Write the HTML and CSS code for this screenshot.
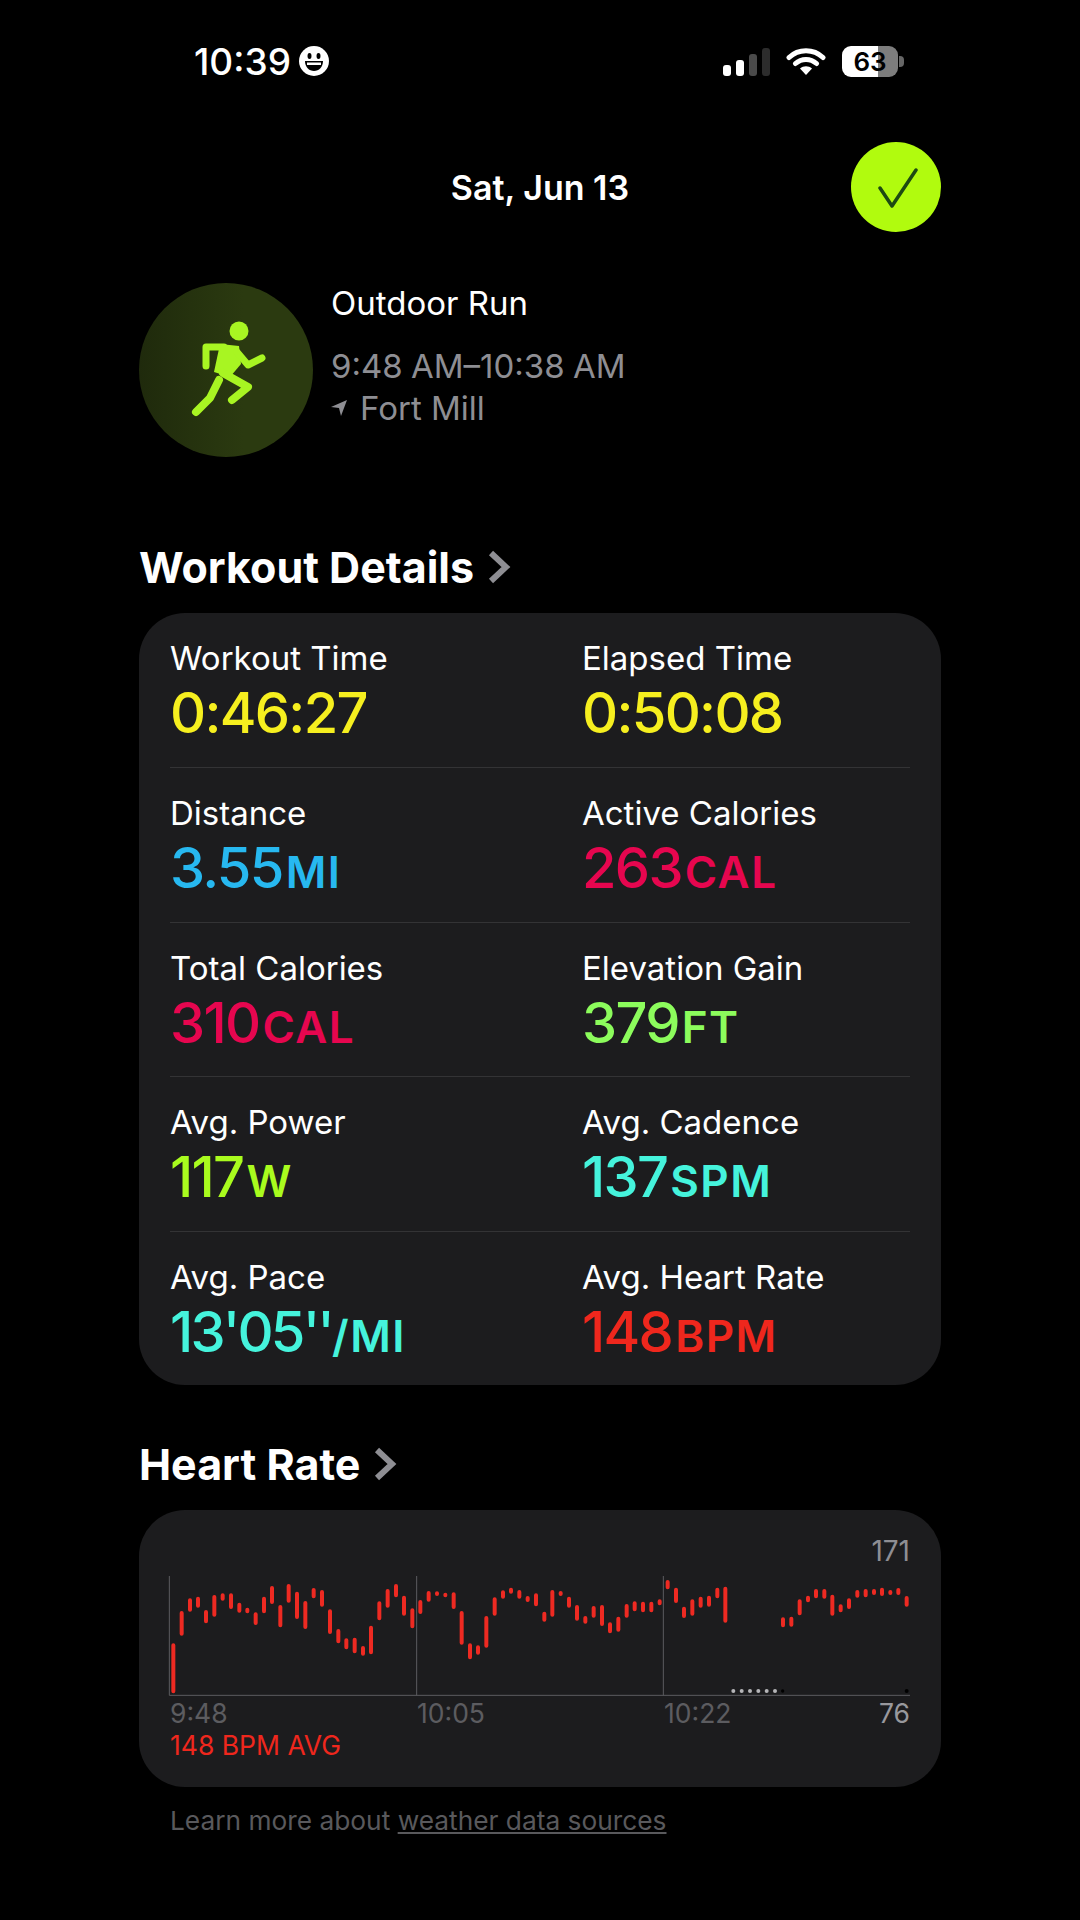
FILE: index.html
```html
<!DOCTYPE html>
<html lang="en">
<head>
    <meta charset="UTF-8">
    <title>Outdoor Run</title>
    <link rel="stylesheet" href="styles.css">
</head>
<body>
    <div class="page">
        <div class="status-bar">
            <div class="status-time">
                <span>10:39</span>
                <svg class="smiley" width="30" height="30" viewBox="0 0 30 30">
                    <circle cx="15" cy="15" r="15" fill="#fff"/>
                    <ellipse cx="10.500" cy="10" rx="2" ry="3" fill="#000"/>
                    <ellipse cx="19.500" cy="10" rx="2" ry="3" fill="#000"/>
                    <path d="M6 15h18c0 6-4 10-9 10s-9-4-9-10z" fill="#000"/>
                    <path d="M8 16.500h14v2.500h-14z" fill="#fff"/>
                </svg>
            </div>
            <div class="status-icons">
                <div class="signal">
                    <span class="signal-bar s1"></span>
                    <span class="signal-bar s2"></span>
                    <span class="signal-bar s3"></span>
                    <span class="signal-bar s4"></span>
                </div>
                <svg class="wifi" width="40" height="28" viewBox="0 0 40 28">
                    <path d="M3 10.500C12.500 1.500 27.500 1.500 37 10.500M9.500 16.500C15.500 11 24.500 11 30.500 16.500" fill="none" stroke="#fff" stroke-width="5" stroke-linecap="round"/>
                    <path d="M14 21.500C17.500 18.500 22.500 18.500 26 21.500L20 28z" fill="#fff"/>
                </svg>
                <div class="battery">
                    <div class="battery-body"><span>63</span></div>
                    <span class="battery-nub"></span>
                </div>
            </div>
        </div>

        <div class="top-bar">
            <span></span>
            <div class="date">Sat, Jun 13</div>
            <div class="done-btn">
                <svg width="44" height="44" viewBox="0 0 44 44">
                    <path d="M6 23L18 41L42 5" fill="none" stroke="#1d4a12" stroke-width="3.500" stroke-linecap="round" stroke-linejoin="round"/>
                </svg>
            </div>
        </div>

        <div class="workout">
            <div class="workout-icon">
                <svg width="80" height="100" viewBox="0 0 80 100">
                    <circle cx="53" cy="11" r="9.500" fill="#a8f522"/>
                    <path d="M34 24L53 26L55 44L44 57L28 52z" fill="#a8f522"/>
                    <g fill="none" stroke="#a8f522" stroke-linecap="round" stroke-linejoin="round">
                        <path d="M20 46V27H38" stroke-width="7"/>
                        <path d="M51 32L62 45L76 38" stroke-width="7"/>
                        <path d="M37 53L62 67L46 80" stroke-width="8"/>
                        <path d="M33 60L24 78L10 92" stroke-width="8"/>
                    </g>
                </svg>
            </div>
            <div class="workout-info">
                <div class="workout-name">Outdoor Run</div>
                <div class="workout-time">9:48 AM–10:38 AM</div>
                <div class="workout-place">
                    <svg width="16" height="16" viewBox="0 0 16 16">
                        <path d="M16 0L10 16L8 8L0 7z" fill="#8e8e93"/>
                    </svg>
                    <span>Fort Mill</span>
                </div>
            </div>
        </div>

        <div class="section-title">
            <span>Workout Details</span>
            <svg width="24" height="36" viewBox="0 0 24 36">
                <path d="M4 4L19 18L4 32" fill="none" stroke="#8e8e93" stroke-width="6"/>
            </svg>
        </div>
        <div class="card stats">
            <div class="stats-row">
                <div class="stat">
                    <div class="stat-label">Workout Time</div>
                    <div class="stat-value yellow">0:46:27</div>
                </div>
                <div class="stat">
                    <div class="stat-label">Elapsed Time</div>
                    <div class="stat-value yellow">0:50:08</div>
                </div>
            </div>
            <div class="stats-row">
                <div class="stat">
                    <div class="stat-label">Distance</div>
                    <div class="stat-value blue">3.55<span class="unit">MI</span></div>
                </div>
                <div class="stat">
                    <div class="stat-label">Active Calories</div>
                    <div class="stat-value pink">263<span class="unit">CAL</span></div>
                </div>
            </div>
            <div class="stats-row">
                <div class="stat">
                    <div class="stat-label">Total Calories</div>
                    <div class="stat-value pink">310<span class="unit">CAL</span></div>
                </div>
                <div class="stat">
                    <div class="stat-label">Elevation Gain</div>
                    <div class="stat-value green">379<span class="unit">FT</span></div>
                </div>
            </div>
            <div class="stats-row">
                <div class="stat">
                    <div class="stat-label">Avg. Power</div>
                    <div class="stat-value lime">117<span class="unit">W</span></div>
                </div>
                <div class="stat">
                    <div class="stat-label">Avg. Cadence</div>
                    <div class="stat-value teal">137<span class="unit">SPM</span></div>
                </div>
            </div>
            <div class="stats-row">
                <div class="stat">
                    <div class="stat-label">Avg. Pace</div>
                    <div class="stat-value teal"><span class="pace">13'05''</span><span class="unit pace-unit">/MI</span></div>
                </div>
                <div class="stat">
                    <div class="stat-label">Avg. Heart Rate</div>
                    <div class="stat-value red">148<span class="unit">BPM</span></div>
                </div>
            </div>
        </div>

        <div class="section-title heart-title">
            <span>Heart Rate</span>
            <svg width="24" height="36" viewBox="0 0 24 36">
                <path d="M4 4L19 18L4 32" fill="none" stroke="#8e8e93" stroke-width="6"/>
            </svg>
        </div>
        <div class="card heart">
            <div class="chart-max">171</div>
            <svg class="chart" width="750" height="124" viewBox="45 129 2250 372">
                <path d="M58 138V496H2280M800 138V496M1540 138V496" fill="none" stroke="#5c5c60" stroke-width="3"/>
                <g fill="none" stroke="#ee2a22" stroke-width="12" stroke-linecap="round">
                    <path d="M70 346V484M95 249V311M120 211V239M144 206V227M168 246V274M193 201V254M218 196V206M243 196V231M268 224V242M292 239V244M317 253V279M342 206V244M366 174V216M391 231V286M416 168V212M441 191V261M466 219V291M491 180V199M516 186V224M540 244V306M565 303V334M589 331V352M614 329V364M639 354V371M663 293V367M688 220V265M713 183V227M738 168V196M762 203V251M787 241V289M811 216V246M836 189V209M861 190V192M886 194V196M911 193V231M935 249V338M960 346V382M984 352V368M1009 264V347M1034 208V251M1059 187V200M1083 179V185M1108 186V200M1133 204V210M1158 196V223M1183 251V269"/>
                    <g transform="translate(1170 0)">
                        <path d="M37 186V254M62 189V192M87 206V227M111 231V266M136 264V275M161 234V257M186 231V282M210 283V304M235 266V299M260 228V257M284 220V238M309 221V241M334 221V241M359 214V220M383 156V172M408 179V213M432 236V258M457 214V251M482 206V227M507 203V224M532 179V199M556 176V272M729 268V286M754 266V284M779 214V250M804 203V211M828 183V199M853 183V200M877 200V251M902 229V241M927 211V231M952 186V197M977 183V196M1002 183V189M1026 179V192M1051 186V189M1075 180V189M1100 204V224"/>
                    </g>
                </g>
                <g transform="translate(1170 0)">
                    <g fill="#b5b5b8">
                        <circle cx="580" cy="483" r="6"/>
                        <circle cx="605" cy="483" r="6"/>
                        <circle cx="630" cy="483" r="6"/>
                        <circle cx="655" cy="483" r="6"/>
                        <circle cx="680" cy="483" r="6"/>
                        <circle cx="705" cy="483" r="6"/>
                    </g>
                    <circle cx="728" cy="483" r="5" fill="#000"/>
                    <circle cx="1100" cy="483" r="6" fill="#000"/>
                </g>
            </svg>
            <div class="chart-axis">
                <span class="tick">9:48</span>
                <span class="tick">10:05</span>
                <span class="tick">10:22</span>
                <span class="chart-min">76</span>
            </div>
            <div class="chart-avg">148 BPM AVG</div>
        </div>

        <div class="footnote">Learn more about <u>weather data sources</u></div>
    </div>
</body>
</html>
```

FILE: styles.css
```css
body {
    margin: 0;
    background-color: #000;
    color: #fff;
    font-family: Inter, "Liberation Sans", sans-serif;
}
.page {
    width: 802px;
    height: 1920px;
    margin-left: 139px;
    overflow: hidden;
}

/* status bar */
.status-bar {
    display: flex;
    justify-content: space-between;
    align-items: center;
    height: 122px;
    padding: 0 37px 0 55px;
}
.status-time {
    display: flex;
    align-items: center;
    gap: 8px;
    font-size: 37px;
    font-weight: 500;
}
.status-icons {
    display: flex;
    align-items: center;
    gap: 16px;
}
.signal {
    display: flex;
    align-items: flex-end;
    gap: 5px;
    height: 30px;
}
.signal-bar {
    width: 8px;
    border-radius: 3px;
    background: #fff;
}
.s1 { height: 11px; }
.s2 { height: 16px; }
.s3 { height: 22px; background: #4a4a4a; }
.s4 { height: 28px; background: #2c2c2c; }
.battery {
    display: flex;
    align-items: center;
    gap: 1px;
}
.battery-body {
    width: 56px;
    height: 31px;
    border-radius: 9px;
    background: linear-gradient(to right, #fff 64%, #7d7d7d 64%);
    color: #000;
    font-size: 26px;
    font-weight: 600;
    line-height: 31px;
    text-align: center;
}
.battery-nub {
    width: 5px;
    height: 11px;
    border-radius: 0 4px 4px 0;
    background: #666;
}

.top-bar {
    display: grid;
    grid-template-columns: 1fr auto 1fr;
    align-items: center;
    height: 90px;
    margin-top: 20px;
}
.date {
    font-size: 34px;
    font-weight: 600;
}
.done-btn {
    justify-self: end;
    display: flex;
    align-items: center;
    justify-content: center;
    width: 90px;
    height: 90px;
    border-radius: 50%;
    background-color: #b1fb0e;
}

/* workout summary */
.workout {
    display: flex;
    gap: 18px;
    margin-top: 51px;
}
.workout-icon {
    display: flex;
    align-items: center;
    justify-content: center;
    width: 174px;
    height: 174px;
    border-radius: 50%;
    background: linear-gradient(to right, #1f2a0c, #2b3a10 60%);
}
.workout-name {
    font-size: 33px;
    line-height: 40px;
}
.workout-time {
    margin-top: 23px;
    font-size: 33px;
    line-height: 40px;
    word-spacing: -1px;
    color: #8e8e93;
}
.workout-place {
    display: flex;
    align-items: center;
    gap: 13px;
    margin-top: 2px;
    font-size: 33px;
    line-height: 40px;
    color: #8e8e93;
}

.section-title {
    display: flex;
    align-items: center;
    gap: 13px;
    height: 50px;
    margin-top: 85px;
    font-size: 43px;
    font-weight: 700;
}
.heart-title {
    margin-top: 54px;
}
.card {
    margin-top: 21px;
    padding: 0 31px;
    border-radius: 46px;
    background-color: #1c1c1e;
}

/* stats grid */
.stats-row {
    display: grid;
    grid-template-columns: 412px 1fr;
    box-sizing: border-box;
    height: 154.400px;
    padding-top: 25px;
    border-top: 1px solid #333335;
}
.stats-row:first-child {
    border-top: none;
}
.stat-label {
    font-size: 33px;
    line-height: 40px;
}
.stat-value {
    margin-top: 5px;
    font-size: 56px;
    font-weight: 500;
    line-height: 60px;
    letter-spacing: -1.700px;
}
.unit {
    margin-left: 3px;
    font-size: 44px;
    font-weight: 600;
    letter-spacing: 1.500px;
}
.pace {
    letter-spacing: -2.800px;
}
.pace-unit {
    margin-left: 0;
}
.yellow { color: #f6ef1f; }
.blue { color: #27b8f0; }
.pink { color: #e6064f; }
.green { color: #8cfc5c; }
.lime { color: #a9fb1e; }
.teal { color: #45f3dc; }
.red { color: #ef271d; }

/* heart rate chart */
.heart {
    box-sizing: border-box;
    height: 277px;
    padding-top: 24px;
}
.chart-max {
    height: 34px;
    font-size: 28px;
    line-height: 34px;
    text-align: right;
    color: #8e8e93;
}
.chart {
    display: block;
    margin: 5px -5px 0;
}
.chart-axis {
    display: grid;
    grid-template-columns: 247px 247px 1fr auto;
    height: 32px;
    font-size: 26.500px;
    line-height: 32px;
    color: #5c5c60;
}
.chart-min {
    color: #98989d;
}
.chart-avg {
    height: 32px;
    font-size: 26.500px;
    line-height: 32px;
    color: #ef271d;
}
.footnote {
    margin: 17px 0 0 31px;
    font-size: 26.300px;
    line-height: 34px;
    color: #59595c;
}
```
